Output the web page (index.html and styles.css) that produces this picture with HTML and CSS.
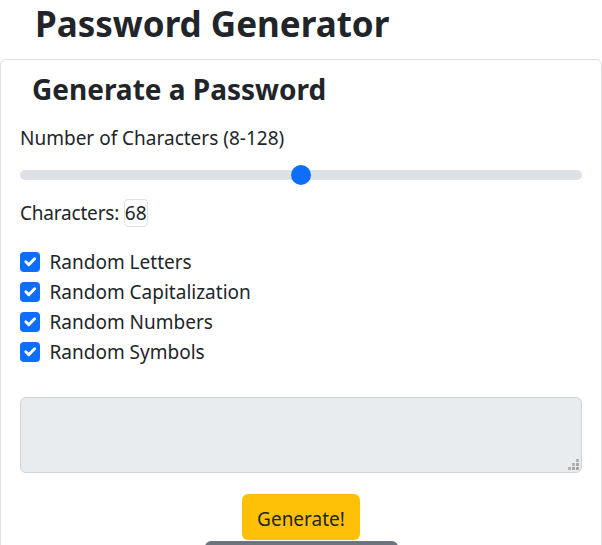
FILE: index.html
```html
<!DOCTYPE html>
<html lang="en">
<head>
<meta charset="utf-8">
<title>Password Generator</title>
<link rel="stylesheet" href="styles.css">
</head>
<body>
<h1 class="page-title">Password Generator</h1>
<div class="card">
  <h2 class="card-title">Generate a Password</h2>
  <label class="range-label" for="length">Number of Characters (8-128)</label>
  <input class="range" id="length" type="range" min="8" max="128" value="68">
  <div class="count">Characters: <span class="count-value">68</span></div>
  <div class="checks">
    <label class="check"><span class="box"><svg viewBox="0 0 20 20" width="20" height="20"><path d="m6 10 3 3 6-6" fill="none" stroke="#fff" stroke-width="3" stroke-linecap="round" stroke-linejoin="round"/></svg></span>Random Letters</label>
    <label class="check"><span class="box"><svg viewBox="0 0 20 20" width="20" height="20"><path d="m6 10 3 3 6-6" fill="none" stroke="#fff" stroke-width="3" stroke-linecap="round" stroke-linejoin="round"/></svg></span>Random Capitalization</label>
    <label class="check"><span class="box"><svg viewBox="0 0 20 20" width="20" height="20"><path d="m6 10 3 3 6-6" fill="none" stroke="#fff" stroke-width="3" stroke-linecap="round" stroke-linejoin="round"/></svg></span>Random Numbers</label>
    <label class="check"><span class="box"><svg viewBox="0 0 20 20" width="20" height="20"><path d="m6 10 3 3 6-6" fill="none" stroke="#fff" stroke-width="3" stroke-linecap="round" stroke-linejoin="round"/></svg></span>Random Symbols</label>
  </div>
  <div class="output-wrap">
    <textarea class="output" readonly aria-label="Generated password"></textarea>
    <svg class="grip" viewBox="0 0 11 11" width="11" height="11" aria-hidden="true">
      <rect x="8" y="0" width="3" height="3" fill="#b3b3b3"/>
      <rect x="4" y="4" width="3" height="3" fill="#b3b3b3"/>
      <rect x="8" y="4" width="3" height="3" fill="#a6a6a6"/>
      <rect x="0" y="8" width="3" height="3" fill="#b3b3b3"/>
      <rect x="4" y="8" width="3" height="3" fill="#a6a6a6"/>
      <rect x="8" y="8" width="3" height="3" fill="#a6a6a6"/>
    </svg>
  </div>
  <div class="actions">
    <button class="btn btn-generate" type="button">Generate!</button>
    <button class="btn btn-copy" type="button" aria-label="Copy to Clipboard"></button>
  </div>
</div>
</body>
</html>
```
FILE: styles.css
```css
html, body {
  overflow: hidden;
}
body {
  margin: 0;
  font-family: "Noto Sans", sans-serif;
  font-size: 19px;
  line-height: 28.5px;
  color: #212529;
  background: #fff;
}
.page-title {
  margin: 0 0 0 35px;
  font-size: 35px;
  line-height: 48px;
  font-weight: 700;
}
.card {
  margin-top: 11px;
  border: 1px solid #dfdfdf;
  border-radius: 6px;
  padding: 0 19px 40px;
  display: flex;
  flex-direction: column;
}
.card-title {
  margin: 12px 0 0 12px;
  font-size: 28px;
  line-height: 35px;
  font-weight: 700;
}
.range-label {
  margin-top: 16.5px;
  display: block;
}
.range {
  -webkit-appearance: none;
  appearance: none;
  display: block;
  margin: 12.5px 0 0;
  width: 100%;
  height: 20px;
  padding: 0;
  background: transparent;
}
.range::-webkit-slider-runnable-track {
  height: 10px;
  border-radius: 5px;
  background: #dee2e6;
}
.range::-webkit-slider-thumb {
  -webkit-appearance: none;
  appearance: none;
  width: 20px;
  height: 20px;
  margin-top: -5px;
  border-radius: 50%;
  background: #0d6efd;
  border: 0;
}
.count {
  margin-top: 14.5px;
  letter-spacing: -0.2px;
}
.count-value {
  border: 1px solid #dee2e6;
  border-radius: 4px;
  padding: 0;
  letter-spacing: 0;
}
.checks {
  margin-top: 19.5px;
  display: flex;
  flex-direction: column;
}
.check {
  display: flex;
  align-items: flex-start;
  height: 30px;
  line-height: 31px;
}
.box {
  width: 19.5px;
  height: 19.5px;
  margin: 5px 10px 0 0;
  border-radius: 4px;
  background: #0d6efd;
  display: flex;
  align-items: center;
  justify-content: center;
  flex: none;
}
.box svg {
  width: 19.5px;
  height: 19.5px;
  display: block;
}
.output-wrap {
  position: relative;
  margin-top: 29.5px;
}
.output {
  display: block;
  box-sizing: border-box;
  width: 100%;
  height: 76px;
  border: 1px solid #ced4da;
  border-radius: 6px;
  background: #e9ecef;
  font: inherit;
  padding: 7px 14px;
  resize: none;
}
.grip {
  position: absolute;
  right: 3px;
  bottom: 3px;
  display: block;
}
.actions {
  display: flex;
  flex-direction: column;
  align-items: center;
  margin-top: 21px;
}
.btn {
  font-family: inherit;
  font-size: 19px;
  line-height: 28.5px;
  border: 0;
  border-radius: 6px;
  cursor: pointer;
}
.btn-generate {
  padding: 11px 15px 6.5px;
  background: #ffc107;
  color: #212529;
}
.btn-copy {
  margin-top: 1px;
  width: 193px;
  height: 46px;
  background: #6c757d;
}
```
